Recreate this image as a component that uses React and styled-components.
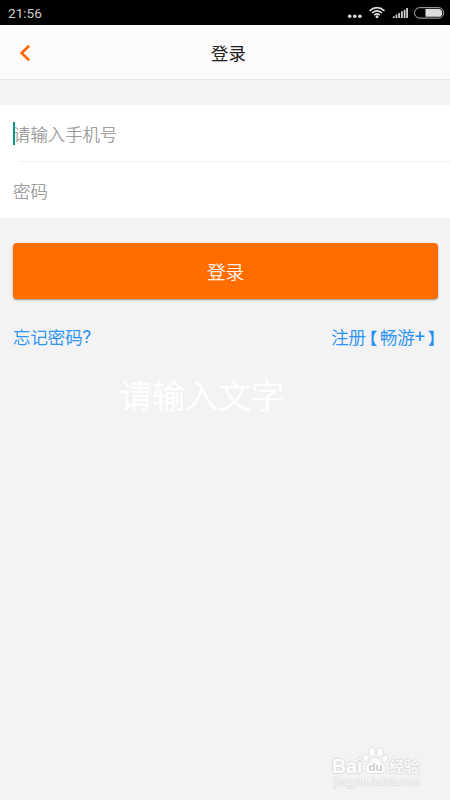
import React from "react";
import styled, { createGlobalStyle } from "styled-components";

const App = () => {
  return (
    <>
      <GlobalStyle />
      <Screen>
        <StatusBar>
          <Clock>21:56</Clock>
          <StatusIcons />
        </StatusBar>
        <Header>
          <BackButton aria-label="返回">
            <svg width="12" height="18" viewBox="0 0 12 18">
              <path d="M10.2 1.7L2.6 9L10.2 16.3" />
            </svg>
          </BackButton>
          <Title>登录</Title>
        </Header>
        <Form>
          <Field $height={56}>
            <Caret />
            请输入手机号
          </Field>
          <Divider />
          <Field $height={56}>密码</Field>
        </Form>
        <LoginButton>登录</LoginButton>
        <Links>
          <Link>
            忘记密码<Latin>?</Latin>
          </Link>
          <Link>
            注册<Bracket $left={3} $right={3}>【</Bracket>畅游<Latin>+</Latin>
            <Bracket $left={3} $right={0}>】</Bracket>
          </Link>
        </Links>
        <Hint>请输入文字</Hint>
        <Watermark>
          <Brand>
            <BrandName>Bai</BrandName>
            <Paw />
            <BrandCn>经验</BrandCn>
          </Brand>
          <Site>jingyan.baidu.com</Site>
        </Watermark>
      </Screen>
    </>
  );
};

const StatusIcons = () => (
  <svg width="100" height="25" viewBox="0 0 100 25" fill="none">
    <g fill="#ddd">
      <circle cx="-0.3" cy="16.3" r="1.8" />
      <circle cx="4.8" cy="16.3" r="1.8" />
      <circle cx="9.9" cy="16.3" r="1.8" />
      <circle cx="27" cy="16.7" r="1.5" />
    </g>
    <g stroke="#ddd" strokeWidth="1.6">
      <path d="M19.5 10.8Q27 4.5 34.5 10.8" />
      <path d="M22 13Q27 8.7 32 13" />
      <path d="M24.2 15.1Q27 12.7 29.8 15.1" />
    </g>
    <path
      d="M43.8 18V16.2M46.5 18V14.5M49.2 18V13M51.9 18V11.3M54.6 18V9.7M57.1 18V8"
      stroke="#ccc"
      strokeWidth="1.8"
    />
    <rect x="64.6" y="7.7" width="29" height="10.4" rx="5" stroke="#b5b5b5" />
    <path d="M75.5 9H88.3A3.9 3.9 0 0 1 88.3 16.8H75.5Z" fill="#ddd" />
  </svg>
);

const Paw = () => (
  <PawIcon viewBox="0 0 28 29">
    <g fill="#fdfdfd" stroke="#dedede" strokeWidth="0.9">
      <ellipse cx="4" cy="12" rx="3" ry="4" transform="rotate(-15 4 12)" />
      <ellipse cx="10.4" cy="5.6" rx="3.3" ry="4.7" />
      <ellipse cx="18.8" cy="6" rx="3.3" ry="4.7" transform="rotate(12 18.8 6)" />
      <ellipse cx="24" cy="12.5" rx="3" ry="4" transform="rotate(15 24 12.5)" />
      <path d="M14 11.5C18.5 11.5 19.5 15.5 22 18C24.6 20.5 25.5 22.5 24.2 25.5C22.5 29 18 27.8 14 27.8C10 27.8 5.5 29 3.8 25.5C2.5 22.5 3.4 20.5 6 18C8.5 15.5 9.5 11.5 14 11.5Z" />
    </g>
    <text x="14" y="25.4" textAnchor="middle">
      du
    </text>
  </PawIcon>
);

const GlobalStyle = createGlobalStyle`
  body {
    margin: 0;
    background: #f3f3f3;
    font-family: "Noto Sans CJK SC", sans-serif;
  }
`;

const Screen = styled.div`
  position: relative;
  display: flex;
  flex-direction: column;
  width: 450px;
  height: 800px;
  overflow: hidden;
  background: #f3f3f3;
`;

const StatusBar = styled.div`
  display: flex;
  align-items: center;
  justify-content: space-between;
  height: 25px;
  padding-left: 8px;
  background: #000;
  svg {
    overflow: visible;
  }
`;

const Clock = styled.span`
  color: #ccc;
  font: 13.6px/25px Roboto, sans-serif;
  padding-top: 2px;
`;

const Header = styled.header`
  display: grid;
  grid-template-columns: 52px 1fr 46px;
  align-items: center;
  box-sizing: border-box;
  height: 55px;
  background: #fcfbf9;
  border-bottom: 1px solid #e6e6e6;
`;

const BackButton = styled.button`
  display: flex;
  padding: 1px 0 0 19px;
  border: 0;
  background: none;
  path {
    fill: none;
    stroke: #ff6900;
    stroke-width: 2.6;
  }
`;

const Title = styled.h1`
  margin: 0;
  padding: 2px 0 0 1px;
  text-align: center;
  color: #222;
  font-size: 17.4px;
  font-weight: 400;
  line-height: 24px;
`;

const Form = styled.div`
  height: 113px;
  margin-top: 25px;
  background: #fff;
`;

const Field = styled.div`
  position: relative;
  height: ${({ $height }) => $height}px;
  padding-left: 13px;
  color: #929292;
  font-size: 17.4px;
  font-weight: 300;
  line-height: 58px;
  -webkit-text-stroke: 0.2px;
`;

const Caret = styled.i`
  position: absolute;
  left: 13px;
  top: 17px;
  width: 2px;
  height: 23px;
  background: #009688;
`;

const Divider = styled.div`
  height: 1px;
  margin-left: 19px;
  background: #f1f1f1;
`;

const LoginButton = styled.button`
  height: 56px;
  margin: 25px 12px 0 13px;
  padding: 0;
  border: 0;
  border-radius: 4px;
  background: #ff6c00;
  box-shadow: 0 1px 2px rgba(0, 0, 0, 0.4);
  color: #fff;
  font-family: inherit;
  font-size: 18.6px;
  font-weight: 300;
  line-height: 56px;
  -webkit-text-stroke: 0.25px;
`;

const Links = styled.div`
  display: flex;
  justify-content: space-between;
  height: 26px;
  margin: 25px 14px 0 13px;
`;

const Link = styled.a`
  display: flex;
  color: #218ef5;
  font-size: 17.4px;
  line-height: 26px;
  white-space: nowrap;
  font-weight: 300;
  -webkit-text-stroke: 0.3px;
`;

const Latin = styled.span`
  font-family: Roboto, sans-serif;
  font-weight: 400;
  font-size: 18px;
  -webkit-text-stroke: 0;
`;

const Bracket = styled.span`
  margin: 0 ${({ $right }) => $right}px 0 ${({ $left }) => $left}px;
  font-size: 16px;
  font-feature-settings: "halt";
`;

const Hint = styled.p`
  margin: 20px 0 0 119px;
  color: #fff;
  font-size: 33px;
  font-weight: 300;
  line-height: 48px;
  -webkit-text-stroke: 0.7px;
`;

const Watermark = styled.div`
  position: absolute;
  left: 332px;
  top: 745px;
  width: 90px;
  color: #fdfdfd;
  text-shadow: 1px 0 1px #dcdcdc, -1px 0 1px #dcdcdc, 0 1px 1px #dcdcdc,
    0 -1px 1px #dcdcdc;
`;

const Brand = styled.div`
  display: flex;
  align-items: flex-end;
  height: 30px;
`;

const BrandName = styled.span`
  width: 30px;
  font: 700 19.5px/18px "Liberation Sans", sans-serif;
`;

const PawIcon = styled.svg`
  width: 27px;
  height: 29px;
  text {
    fill: #cfcfcf;
    font: 700 12px "Liberation Sans", sans-serif;
    text-shadow: none;
  }
`;

const BrandCn = styled.span`
  font-size: 15.3px;
  font-weight: 500;
  line-height: 20px;
`;

const Site = styled.div`
  padding-left: 1px;
  color: #fafafa;
  font: 11.6px/13px "Liberation Serif", serif;
  text-shadow: 0 0 1px #c8c8c8, 1px 1px 1px #dedede;
`;

export default App;
